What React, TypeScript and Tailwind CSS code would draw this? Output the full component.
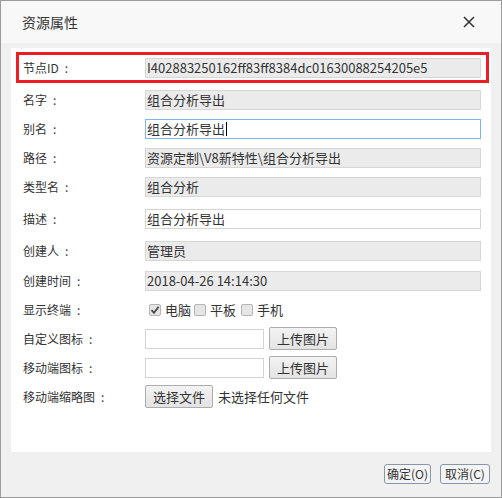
import React from "react";

const font = { fontFamily: '"Noto Sans CJK SC", "Liberation Sans", sans-serif' };

function Label({ text, w = "w-[122px]" }: { text: string; w?: string }) {
  return (
    <div className={`${w} shrink-0 text-[12px] leading-[20px] text-[#333]`}>
      {text}
      <span className="ml-[6px]">:</span>
    </div>
  );
}

function Field({ value, disabled, focus, w = "w-[336px]" }: { value?: string; disabled?: boolean; focus?: boolean; w?: string }) {
  const cls = disabled
    ? "bg-[#ebebeb] border-[#d6d6d6]"
    : focus
    ? "bg-white border-[#7eb4ea]"
    : "bg-white border-[#d4d4d4]";
  return (
    <div className={`${w} h-[20px] border ${cls} px-[1px] text-[13px] leading-[18px] text-[#333] whitespace-nowrap overflow-hidden flex items-center`}>
      {value}
      {focus && <span className="inline-block w-[1px] h-[14px] bg-black ml-[1px]" />}
    </div>
  );
}

function Box({ checked }: { checked?: boolean }) {
  return (
    <span className="inline-flex items-center justify-center w-[12px] h-[12px] border border-[#b4b4b4] bg-[#e6e6e6] rounded-[2px]">
      {checked && (
        <svg width="10" height="10" viewBox="0 0 10 10">
          <path d="M1.5 5.2 L4 7.8 L8.6 1.8" fill="none" stroke="#4a4a4a" strokeWidth="1.8" />
        </svg>
      )}
    </span>
  );
}

function Btn({ children, w }: { children: React.ReactNode; w: string }) {
  return (
    <div className={`${w} h-[23px] border border-[#adadad] rounded-[2px] bg-gradient-to-b from-[#f3f3f3] to-[#e3e3e3] text-[13px] leading-[21px] text-[#333] flex items-center justify-center`}>
      {children}
    </div>
  );
}

export default function App() {
  return (
    <div className="w-[502px] h-[498px] border border-[#9c9c9c] bg-[#f0f0f0] flex flex-col" style={font}>
      {/* header */}
      <div className="h-[42px] bg-[#f8f8f8] flex items-center justify-between pl-[21px] pr-[26px] shrink-0">
        <span className="text-[14px] text-[#333] leading-[20px]">资源属性</span>
        <svg width="12" height="12" viewBox="0 0 12 12">
          <path d="M1 1 L11 11 M11 1 L1 11" stroke="#333" strokeWidth="1.5" />
        </svg>
      </div>

      {/* body */}
      <div className="px-[10px] pt-[5px]">
        <div className="h-[404px] bg-white pt-[4px] flex flex-col">
          <div className="ml-[5px] mr-[2px] h-[31px] border-[3px] border-[#ee1c25] flex items-center pl-[4px]">
            <Label text="节点ID" />
            <Field value="I402883250162ff83ff8384dc01630088254205e5" disabled />
          </div>

          <div className="pl-[12px] flex flex-col">
            <div className="flex items-center mt-[7px]"><Label text="名字" /><Field value="组合分析导出" disabled /></div>
            <div className="flex items-center mt-[9px]"><Label text="别名" /><Field value="组合分析导出" focus /></div>
            <div className="flex items-center mt-[9px]"><Label text="路径" /><Field value="资源定制\V8新特性\组合分析导出" disabled /></div>
            <div className="flex items-center mt-[9px]"><Label text="类型名" /><Field value="组合分析" disabled /></div>
            <div className="flex items-center mt-[12px]"><Label text="描述" /><Field value="组合分析导出" /></div>
            <div className="flex items-center mt-[12px]"><Label text="创建人" /><Field value="管理员" disabled /></div>
            <div className="flex items-center mt-[10px]"><Label text="创建时间" /><Field value="2018-04-26 14:14:30" disabled /></div>
            <div className="flex items-center mt-[9px] h-[20px]">
              <Label text="显示终端" />
              <div className="flex items-center text-[13px] text-[#333] pl-[4px]">
                <Box checked />
                <span className="ml-[4px] mr-[3px]">电脑</span>
                <Box />
                <span className="ml-[4px] mr-[5px]">平板</span>
                <Box />
                <span className="ml-[4px]">手机</span>
              </div>
            </div>
            <div className="flex items-center mt-[7px] h-[23px]">
              <Label text="自定义图标" />
              <Field w="w-[119px]" />
              <div className="ml-[5px]"><Btn w="w-[68px]">上传图片</Btn></div>
            </div>
            <div className="flex items-center mt-[6px] h-[23px]">
              <Label text="移动端图标" />
              <Field w="w-[119px]" />
              <div className="ml-[5px]"><Btn w="w-[68px]">上传图片</Btn></div>
            </div>
            <div className="flex items-center mt-[6px] h-[23px]">
              <Label text="移动端缩略图" />
              <Btn w="w-[68px]">选择文件</Btn>
              <span className="ml-[5px] text-[13px] text-[#333]">未选择任何文件</span>
            </div>
          </div>
        </div>
      </div>

      {/* footer */}
      <div className="flex-1 flex items-center justify-end gap-[9px] pr-[11px] pb-[2px]">
        <div className="w-[47px] h-[20px] border border-[#8796ab] rounded-[3px] bg-[#f4f4f4] text-[12px] leading-[18px] text-[#333] flex items-center justify-center">确定(O)</div>
        <div className="w-[50px] h-[20px] border border-[#8796ab] rounded-[3px] bg-[#f4f4f4] text-[12px] leading-[18px] text-[#333] flex items-center justify-center">取消(C)</div>
      </div>
    </div>
  );
}
